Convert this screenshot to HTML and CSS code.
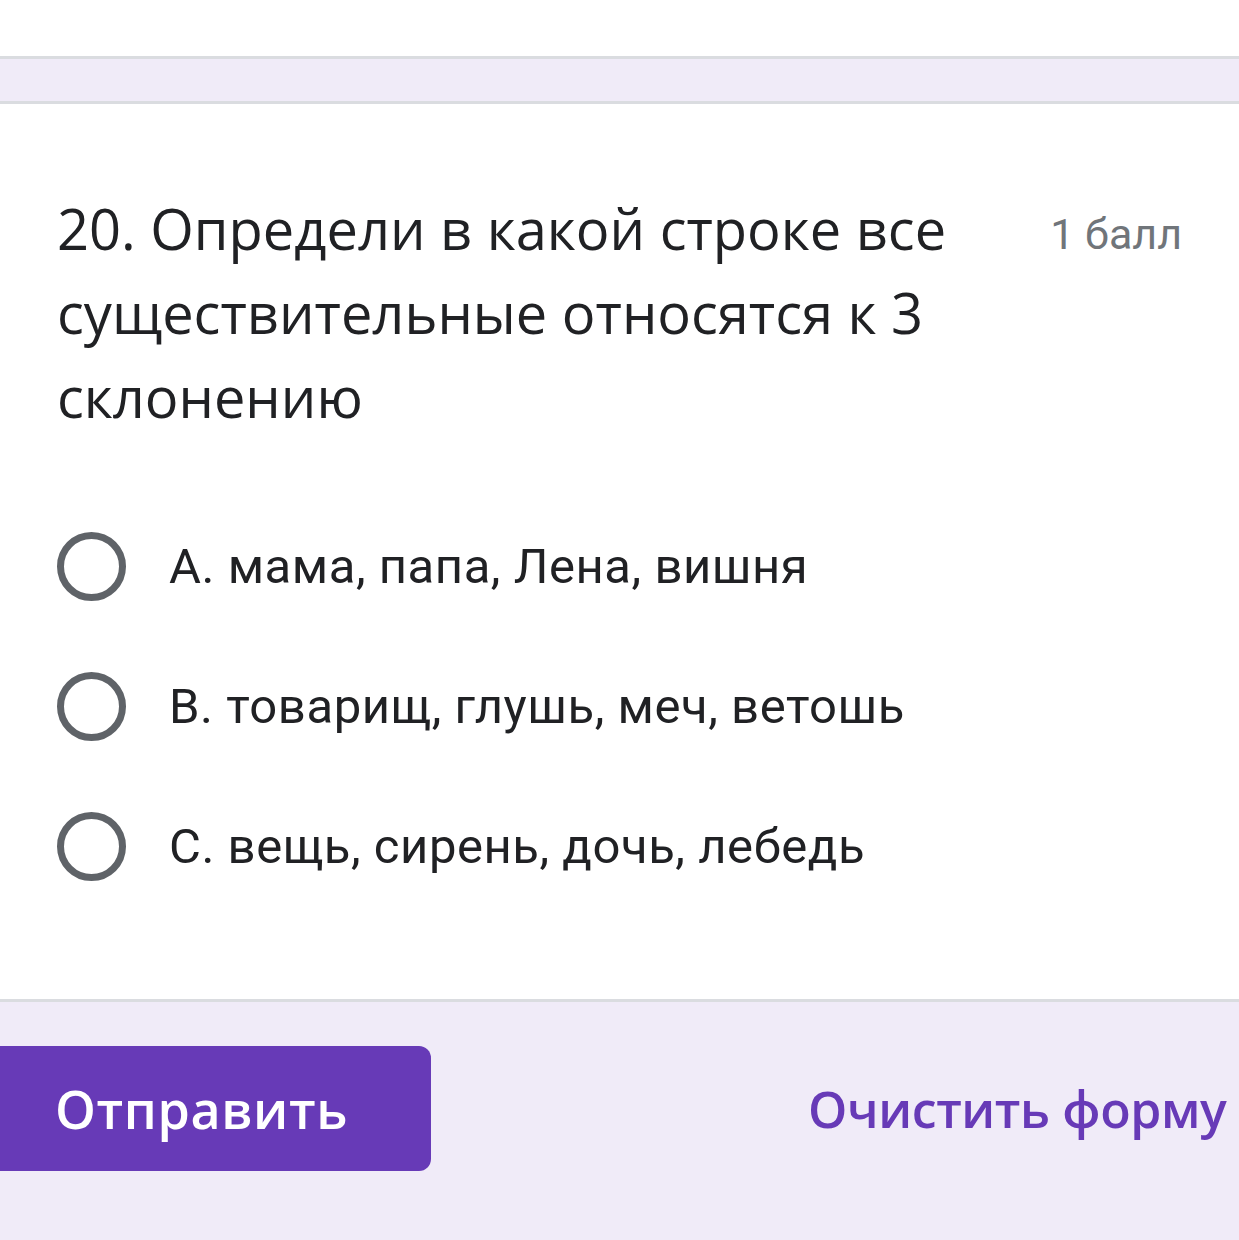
FILE: index.html
```html
<html>

<head>
  <link rel="stylesheet" href="styles.css">
</head>

<body>
  <div class="prev-card"></div>

  <div class="question-card">
    <div class="question-head">
      <div class="question-title">20. Определи в какой строке все существительные относятся к 3 склонению</div>
      <div class="question-points">1 балл</div>
    </div>

    <div class="options">
      <label class="option">
        <span class="radio"></span>
        <span class="option-text">А. мама, папа, Лена, вишня</span>
      </label>
      <label class="option">
        <span class="radio"></span>
        <span class="option-text">В. товарищ, глушь, меч, ветошь</span>
      </label>
      <label class="option">
        <span class="radio"></span>
        <span class="option-text">С. вещь, сирень, дочь, лебедь</span>
      </label>
    </div>
  </div>

  <div class="form-footer">
    <a href="#" class="submit-btn">Отправить</a>
    <a href="#" class="clear-btn">Очистить форму</a>
  </div>
</body>

</html>
```

FILE: styles.css
```css
body {
  margin: 0;
  background: #f0ebf8;
  color: #202124;
  font-family: Roboto, Arial, sans-serif;
  overflow: hidden;
}

.prev-card {
  height: 56px;
  background: #ffffff;
  border-bottom: 3px solid #dadce0;
}

.question-card {
  margin-top: 42px;
  background: #ffffff;
  border-top: 3px solid #dadce0;
  border-bottom: 3px solid #dadce0;
  padding: 82px 0 83px 57px;
}

.question-head {
  display: flex;
  align-items: flex-start;
}

.question-title {
  width: 975px;
  font-family: "Open Sans", "Noto Sans", sans-serif;
  font-size: 56px;
  line-height: 84px;
  color: #202124;
}

.question-points {
  margin-left: auto;
  margin-right: 57px;
  padding-top: 6px;
  font-size: 43px;
  line-height: 84px;
  color: #70757a;
}

.options {
  margin-top: 58px;
}

.option {
  display: flex;
  align-items: center;
  height: 140px;
}

.radio {
  box-sizing: border-box;
  width: 69px;
  height: 69px;
  border: 7px solid #5f6368;
  border-radius: 50%;
  flex-shrink: 0;
}

.option-text {
  margin-left: 43px;
  font-size: 49px;
  color: #202124;
  letter-spacing: 0.55px;
}

.form-footer {
  display: flex;
  align-items: center;
  padding-top: 44px;
}

.submit-btn {
  display: block;
  margin-left: -29px;
  padding: 0 83px 0 84px;
  height: 125px;
  line-height: 125px;
  background: #673ab7;
  border-radius: 12px;
  color: #ffffff;
  font-family: "Open Sans", "Noto Sans", sans-serif;
  font-weight: 600;
  font-size: 52px;
  letter-spacing: 0.6px;
  text-decoration: none;
  white-space: nowrap;
}

.clear-btn {
  margin-left: 377px;
  color: #673ab7;
  font-family: "Open Sans", "Noto Sans", sans-serif;
  font-weight: 600;
  font-size: 50px;
  letter-spacing: -0.4px;
  text-decoration: none;
  white-space: nowrap;
}
```
